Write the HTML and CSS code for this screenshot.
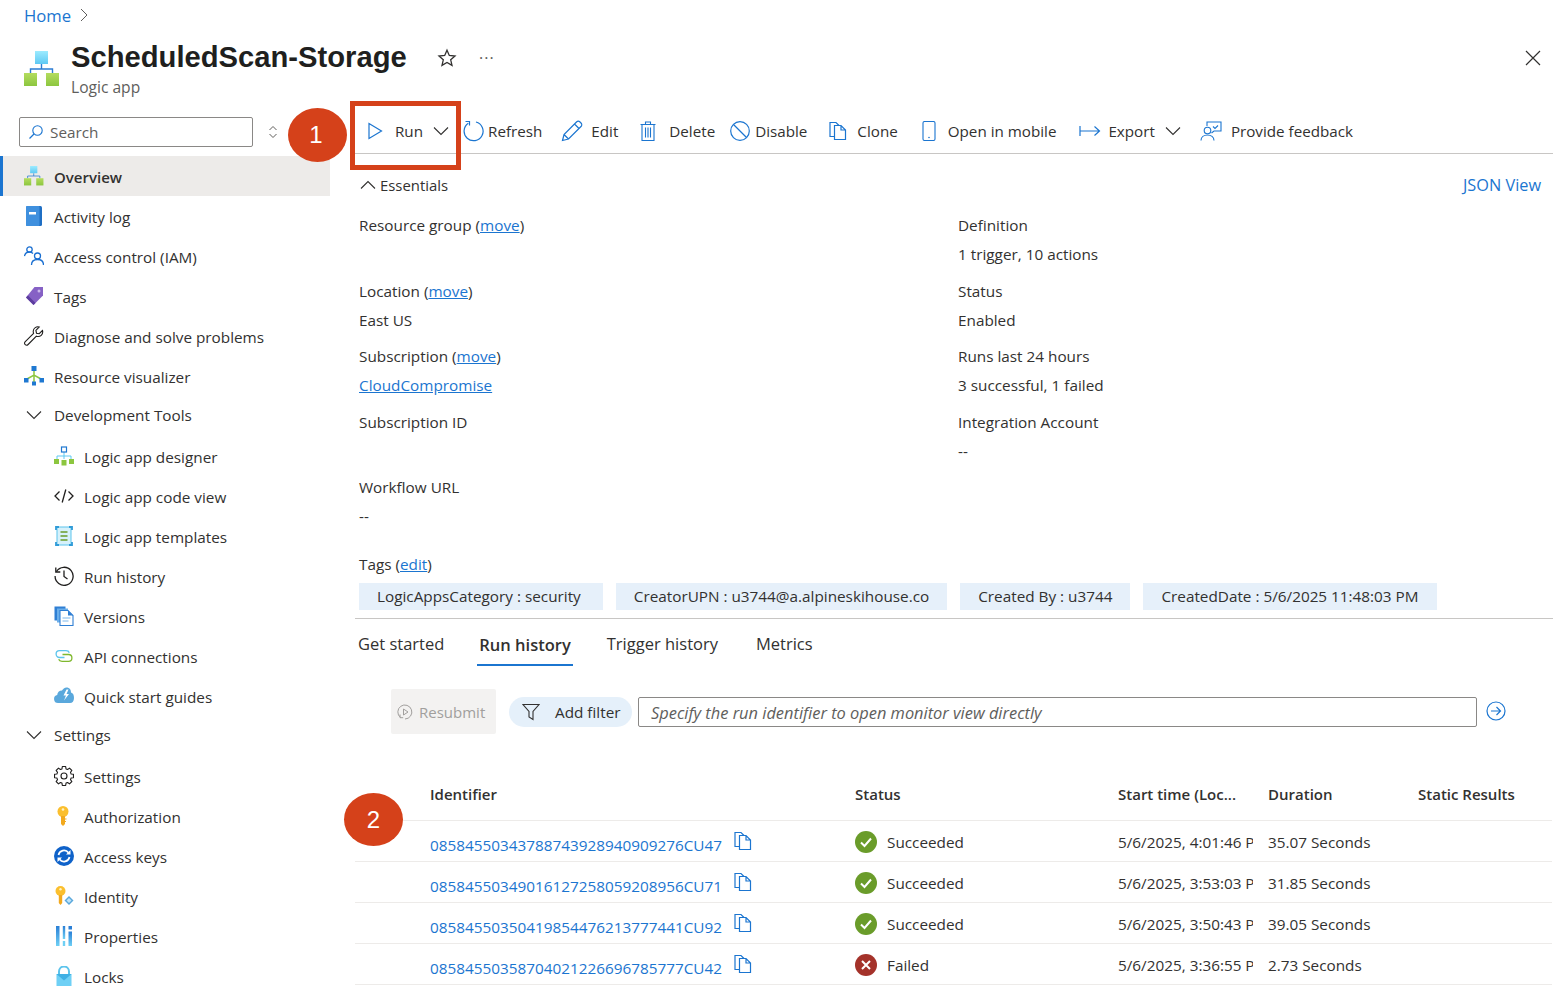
FILE: index.html
```html
<!DOCTYPE html>
<html lang="en">
<head>
  <meta charset="UTF-8" />
  <title>ScheduledScan-Storage - Logic app</title>
  <link rel="stylesheet" href="styles.css">
</head>
<body>
  <svg class="sprite" aria-hidden="true">
    <defs>
      <linearGradient id="skyGrad" x1="0" y1="0" x2="0" y2="1"><stop offset="0" stop-color="#9cebff"/><stop offset="1" stop-color="#5fc9f3"/></linearGradient>
      <linearGradient id="greenGrad" x1="0" y1="0" x2="0" y2="1"><stop offset="0" stop-color="#b4dc5f"/><stop offset="1" stop-color="#8cc63f"/></linearGradient>
      <linearGradient id="barGrad" x1="0" y1="0" x2="0" y2="1"><stop offset="0" stop-color="#2a7fd6"/><stop offset="1" stop-color="#6fd0f5"/></linearGradient>
      <symbol id="i-logic" viewBox="0 0 36 36">
        <path d="M17.5 13v5M6.5 22v-4h22v4" fill="none" stroke="#2b7cd3" stroke-width="1.4"/>
        <rect x="11" y="0" width="13" height="13" fill="url(#skyGrad)"/>
        <rect x="0" y="22" width="13" height="13" fill="url(#greenGrad)"/>
        <rect x="22" y="22" width="13" height="13" fill="url(#greenGrad)"/>
      </symbol>
      <symbol id="i-copy" viewBox="0 0 20 20">
        <path d="M6.5 15.5H2V1.5h6l3 3" fill="none" stroke="#1b75d0" stroke-width="1.2"/>
        <path d="M6.5 4.5h6.5l4.5 4.5v9.5H6.500zM13 4.5V9h4.500" fill="none" stroke="#1b75d0" stroke-width="1.2"/>
      </symbol>
      <symbol id="i-chev" viewBox="0 0 16 10">
        <path d="M1 1.500l7 7 7-7" fill="none" stroke="#323130" stroke-width="1.1"/>
      </symbol>
      <symbol id="i-ok" viewBox="0 0 22 22">
        <circle cx="11" cy="11" r="11" fill="#6a9c2a"/>
        <path d="M6 11.500l3.500 3.500L16 7.500" fill="none" stroke="#fff" stroke-width="2"/>
      </symbol>
      <symbol id="i-fail" viewBox="0 0 22 22">
        <circle cx="11" cy="11" r="11" fill="#a4322a"/>
        <path d="M7 7l8 8M15 7l-8 8" fill="none" stroke="#fff" stroke-width="2"/>
      </symbol>
    </defs>
  </svg>

  <div class="page">
    <div class="breadcrumb">
      <a class="link" href="#">Home</a>
      <svg class="crumb-sep" viewBox="0 0 8 14" width="8" height="14"><path d="M1 1l6 6-6 6" fill="none" stroke="#605e5c" stroke-width="1"/></svg>
    </div>

    <div class="title-row">
      <svg class="logo" width="36" height="36"><use href="#i-logic"/></svg>
      <div class="title-text">
        <h1>ScheduledScan-Storage</h1>
        <div class="subtitle">Logic app</div>
      </div>
      <svg class="star" viewBox="0 0 20 20" width="20" height="20"><path d="M10 2.200l2.300 5.300 5.700.5-4.300 3.800 1.300 5.600L10 14.500l-5 2.900 1.300-5.600L2 8l5.700-.5z" fill="none" stroke="#323130" stroke-width="1.300"/></svg>
      <div class="more">···</div>
      <svg class="close" viewBox="0 0 16 16" width="16" height="16"><path d="M1 1l14 14M15 1L1 15" stroke="#323130" stroke-width="1.200"/></svg>
    </div>

    <div class="layout">
      <aside class="sidebar">
        <div class="search-row">
          <div class="search">
            <svg viewBox="0 0 16 16" width="16" height="16"><circle cx="9.500" cy="6.500" r="4.700" fill="none" stroke="#1b75d0" stroke-width="1.100"/><path d="M6 10l-4.500 4.500" stroke="#1b75d0" stroke-width="1.200"/></svg>
            <span>Search</span>
          </div>
          <svg class="sort" viewBox="0 0 10 14" width="10" height="14"><path d="M1.500 5L5 1.500 8.500 5M1.500 9L5 12.500 8.500 9" fill="none" stroke="#605e5c" stroke-width="1"/></svg>
        </div>

        <nav class="nav">
          <a class="nav-item active"><svg class="ico" viewBox="0 0 20 20"><use href="#i-logic" width="20" height="20"/></svg><span>Overview</span></a>
          <a class="nav-item"><svg class="ico" viewBox="0 0 20 20"><rect x="2" y="0" width="16" height="20" rx="1.500" fill="#1f6fc4"/><rect x="2" y="0" width="13.500" height="20" rx="1" fill="#3f90de"/><rect x="5" y="6" width="7" height="2.500" fill="#fff"/></svg><span>Activity log</span></a>
          <a class="nav-item"><svg class="ico" viewBox="0 0 20 20"><g fill="none" stroke="#1a6fd1" stroke-width="1.300"><circle cx="5.500" cy="3.500" r="2.700"/><path d="M.5 10c.5-2.500 2.500-4 5-4 1.500 0 2.500.5 3.500 1.500"/><circle cx="13.500" cy="10" r="3"/><path d="M7.500 19c0-3.500 2.500-5.500 6-5.500s6 2 6 5.500"/></g></svg><span>Access control (IAM)</span></a>
          <a class="nav-item"><svg class="ico" viewBox="0 0 20 20"><path d="M10.500 1H19v8.500L9.500 19 2 11.500z" fill="#8661c5"/><path d="M2 11.500L9.500 19l2-2L4 9.500z" fill="#5c3d9e"/><circle cx="15" cy="5" r="1.500" fill="#c9b6ea"/></svg><span>Tags</span></a>
          <a class="nav-item"><svg class="ico" viewBox="0 0 20 20"><path d="M18.500 4.500l-3.300 3.200-2.700-.5-.6-2.800L15.200 1c-2.800-.8-5.800 1-6 4.200 0 .8.100 1.500.4 2.200L1.300 15.600c-1 1-1 2.200-.1 3 .9.800 2 .8 2.900-.1l8.300-8.300c3.700 1.200 7.200-1.700 6.100-5.700z" fill="none" stroke="#201f1e" stroke-width="1.100"/></svg><span>Diagnose and solve problems</span></a>
          <a class="nav-item"><svg class="ico" viewBox="0 0 20 20"><path d="M10 4v12M3 13l7-4 7 4" fill="none" stroke="#8cc63f" stroke-width="1.500"/><rect x="7.500" y="0" width="5" height="5" fill="#1f78d1"/><rect x="0" y="12" width="4.500" height="4.500" fill="#1f78d1"/><rect x="15.500" y="12" width="4.500" height="4.500" fill="#1f78d1"/><rect x="8" y="15.500" width="4" height="4" fill="#1f78d1"/></svg><span>Resource visualizer</span></a>

          <div class="nav-group"><svg class="group-chev" width="16" height="10"><use href="#i-chev"/></svg><span>Development Tools</span></div>
          <a class="nav-item sub"><svg class="ico" viewBox="0 0 20 20"><path d="M10 6v4M3 13v-3h14v3M10 10v3" fill="none" stroke="#5fc9f3" stroke-width="1"/><rect x="7.500" y="1" width="5" height="5" fill="#fff" stroke="#1f78d1" stroke-width="1.200"/><rect x="0" y="13" width="5" height="5" fill="#8cc63f"/><rect x="7.500" y="14" width="5" height="5.500" fill="#8cc63f"/><rect x="15" y="13" width="5" height="5" fill="#8cc63f"/></svg><span>Logic app designer</span></a>
          <a class="nav-item sub"><svg class="ico" viewBox="0 0 20 20"><path d="M5.500 5.500L1 10l4.500 4.500M14.500 5.500L19 10l-4.500 4.500M11.800 3.500L8.200 16.500" fill="none" stroke="#201f1e" stroke-width="1.300"/></svg><span>Logic app code view</span></a>
          <a class="nav-item sub"><svg class="ico" viewBox="0 0 20 20"><rect x="3" y="1" width="14" height="18" fill="#d6f1fb" stroke="#5cc4ec" stroke-width="1"/><path d="M2 4V1h3M15 1h3v3M2 16v3h3M15 19h3v-3" fill="none" stroke="#2f9bd8" stroke-width="1.800"/><path d="M6.500 6h7M6.500 10h7M6.500 14h7" stroke="#6a9c2a" stroke-width="1.600"/></svg><span>Logic app templates</span></a>
          <a class="nav-item sub"><svg class="ico" viewBox="0 0 20 20"><path d="M2.400 5.600A9 9 0 1 1 1.100 10" fill="none" stroke="#201f1e" stroke-width="1.300"/><path d="M1.800 1.500v4.500h4.500M10 4.500V10.500l3.500 2.500" fill="none" stroke="#201f1e" stroke-width="1.300"/></svg><span>Run history</span></a>
          <a class="nav-item sub"><svg class="ico" viewBox="0 0 20 20"><rect x="0.500" y="0.500" width="11" height="14" fill="#2f7fd4"/><rect x="3" y="2.500" width="11" height="14" fill="#6aaeea"/><path d="M6 4.500h8l5 5V19.500H6z" fill="#fff" stroke="#2f7fd4" stroke-width="1.100"/><path d="M14 4.500l5 5h-5z" fill="#2f7fd4"/><path d="M8.500 12h8M8.500 15h6" stroke="#7db7ec" stroke-width="1.200"/></svg><span>Versions</span></a>
          <a class="nav-item sub"><svg class="ico" viewBox="0 0 20 20"><g fill="none" stroke-width="1.300"><path d="M10.500 11.500H5.500a3.300 3.300 0 0 1 0-6.800h6.500c1.800 0 3 1 3.300 2" stroke="#5cc4ec"/><path d="M8.500 8.500h6a3.300 3.300 0 0 1 0 6.800H8c-1.800 0-3-1-3.300-2" stroke="#7fb82e"/></g></svg><span>API connections</span></a>
          <a class="nav-item sub"><svg class="ico" viewBox="0 0 20 20"><path d="M4 17a4 4 0 0 1-.8-7.900A5 5 0 0 1 8 4.500c1-2 3-3.500 5.500-3 2.500.5 3.500 2.500 3.500 5 2 .5 3 2.500 3 5.500s-1.500 5-4 5z" fill="#5aa8dc"/><path d="M12.500 3.500L9.500 9.500h2.500l-2 5 5-6.500h-2.500l2-4.500z" fill="#fff"/></svg><span>Quick start guides</span></a>

          <div class="nav-group"><svg class="group-chev" width="16" height="10"><use href="#i-chev"/></svg><span>Settings</span></div>
          <a class="nav-item sub"><svg class="ico" viewBox="0 0 20 20"><path d="M17.110 7.960L19.450 8.330V11.670L17.110 12.040 16.470 13.590 17.860 15.510 15.510 17.860 13.590 16.470 12.040 17.110 11.670 19.450H8.330L7.960 17.110 6.410 16.470 4.490 17.860 2.140 15.510 3.530 13.590 2.890 12.040 .55 11.670V8.330L2.890 7.960 3.530 6.410 2.140 4.490 4.490 2.140 6.410 3.530 7.960 2.890 8.330 .55H11.670L12.040 2.890 13.590 3.530 15.510 2.140 17.860 4.490 16.470 6.410z" fill="none" stroke="#201f1e" stroke-width="1.100" stroke-linejoin="round"/><circle cx="10" cy="10" r="3" fill="none" stroke="#201f1e" stroke-width="1.100"/></svg><span>Settings</span></a>
          <a class="nav-item sub"><svg class="ico" viewBox="0 0 20 20"><circle cx="9" cy="5.500" r="5.500" fill="#fbbf2e"/><circle cx="9" cy="3.500" r="1.300" fill="#fff2c4"/><path d="M7 10h4v8l-2 2-2-2z" fill="#f2a91e"/><path d="M11 13h1.500M11 15.500h1" stroke="#f2a91e" stroke-width="1.200"/></svg><span>Authorization</span></a>
          <a class="nav-item sub"><svg class="ico" viewBox="0 0 20 20"><circle cx="10" cy="10" r="10" fill="#0f62c9"/><path d="M4.500 9a5.600 5.600 0 0 1 10-2.300M15.500 11a5.600 5.600 0 0 1-10 2.300" fill="none" stroke="#fff" stroke-width="1.700"/><path d="M16.500 4v4.500H12zM3.500 16v-4.500H8z" fill="#fff"/></svg><span>Access keys</span></a>
          <a class="nav-item sub"><svg class="ico" viewBox="0 0 20 20"><circle cx="6.500" cy="5" r="5" fill="#fbbf2e"/><circle cx="6.500" cy="3.200" r="1.200" fill="#fff2c4"/><path d="M4.800 9h3.400v8l-1.700 2-1.700-2z" fill="#f2a91e"/><path d="M15 10l4.500 4.500-4.500 4.500-4.500-4.500z" fill="#5aa8dc"/><path d="M15 12l2.500 2.500-2.500 2.500-2.500-2.500z" fill="#bfe3f7"/></svg><span>Identity</span></a>
          <a class="nav-item sub"><svg class="ico" viewBox="0 0 20 20"><rect x="2" y="0" width="3.500" height="20" fill="url(#barGrad)"/><rect x="8.800" y="0" width="2.400" height="13" fill="url(#barGrad)"/><rect x="8.800" y="15" width="2.400" height="5" fill="#6fd0f5"/><rect x="14.500" y="0" width="3.500" height="3.500" fill="#2a7fd6"/><rect x="14.500" y="5.500" width="3.500" height="14.500" fill="url(#barGrad)"/></svg><span>Properties</span></a>
          <a class="nav-item sub"><svg class="ico" viewBox="0 0 20 20"><path d="M5 9V5.500a5 5 0 0 1 10 0V9" fill="none" stroke="#5cc4ec" stroke-width="2"/><rect x="2.500" y="8" width="15" height="12" fill="#6fd0f5"/><path d="M2.500 8h15L10 14.500z" fill="#3fb0e4"/></svg><span>Locks</span></a>
        </nav>
      </aside>

      <main class="main">
        <div class="toolbar">
          <div class="tool tool-run"><svg viewBox="0 0 16 18" width="16" height="18"><path d="M2 1.500L14.500 9 2 16.500z" fill="none" stroke="#1b75d0" stroke-width="1.200"/></svg><span>Run</span><svg class="tool-chev" width="16" height="10"><use href="#i-chev"/></svg></div>
          <div class="tool tool-refresh"><svg viewBox="0 0 22 22" width="22" height="22"><path d="M6.300 3.300A9.500 9.500 0 1 0 14 2" fill="none" stroke="#1b75d0" stroke-width="1.200"/><path d="M3.500 1.500h4v4" fill="none" stroke="#1b75d0" stroke-width="1.200"/></svg><span>Refresh</span></div>
          <div class="tool tool-edit"><svg viewBox="0 0 22 22" width="22" height="22"><path d="M1.500 20.500l1.500-6L15.500 2c1-1 2.500-1 3.500 0l1 1c1 1 1 2.500 0 3.500L7.500 19zM3 14.500L7.500 19M13.500 4l4.500 4.500" fill="none" stroke="#1b75d0" stroke-width="1.200"/></svg><span>Edit</span></div>
          <div class="tool tool-delete"><svg viewBox="0 0 16 20" width="16" height="20"><path d="M.5 3.500h15M5.500 3.500V1h5v2.500M2 3.500V19.500h12V3.500M5.500 6.500v10M8 6.500v10M10.500 6.500v10" fill="none" stroke="#1b75d0" stroke-width="1.100"/></svg><span>Delete</span></div>
          <div class="tool tool-disable"><svg viewBox="0 0 20 20" width="20" height="20"><circle cx="10" cy="10" r="9.300" fill="none" stroke="#1b75d0" stroke-width="1.200"/><path d="M3.500 3.500l13 13" stroke="#1b75d0" stroke-width="1.200"/></svg><span>Disable</span></div>
          <div class="tool tool-clone"><svg viewBox="0 0 20 20" width="20" height="20"><use href="#i-copy"/></svg><span>Clone</span></div>
          <div class="tool tool-mobile"><svg viewBox="0 0 14 20" width="14" height="20"><rect x="1" y="0.500" width="12" height="19" rx="1.500" fill="none" stroke="#1b75d0" stroke-width="1.100"/><circle cx="7" cy="16.500" r=".8" fill="#1b75d0"/></svg><span>Open in mobile</span></div>
          <div class="tool tool-export"><svg viewBox="0 0 22 12" width="22" height="12"><path d="M1 1v10M1 6h19M15.500 1.500L20.500 6l-5 4.500" fill="none" stroke="#1b75d0" stroke-width="1.200"/></svg><span>Export</span><svg class="tool-chev" width="16" height="10"><use href="#i-chev"/></svg></div>
          <div class="tool tool-feedback"><svg viewBox="0 0 22 20" width="22" height="20"><path d="M7 5V1h14v9h-7l-2.500 2" fill="none" stroke="#1b75d0" stroke-width="1.100"/><circle cx="7.500" cy="9.500" r="3.300" fill="none" stroke="#1b75d0" stroke-width="1.100"/><path d="M1 19.500c0-3.500 3-5.500 6.500-5.500s6.500 2 6.500 5.500" fill="none" stroke="#1b75d0" stroke-width="1.100"/><path d="M13 5.500l2 2 3-3" fill="none" stroke="#1b75d0" stroke-width="1.100"/></svg><span>Provide feedback</span></div>
        </div>

        <div class="essentials-head">
          <svg viewBox="0 0 16 10" width="16" height="10"><path d="M1 8.500l7-7 7 7" fill="none" stroke="#323130" stroke-width="1.100"/></svg>
          <span>Essentials</span>
          <a class="link json" href="#">JSON View</a>
        </div>

        <div class="fields">
          <div class="field"><div>Resource group (<a class="link under" href="#">move</a>)</div></div>
          <div class="field"><div>Definition</div><div>1 trigger, 10 actions</div></div>
          <div class="field"><div>Location (<a class="link under" href="#">move</a>)</div><div>East US</div></div>
          <div class="field"><div>Status</div><div>Enabled</div></div>
          <div class="field"><div>Subscription (<a class="link under" href="#">move</a>)</div><div><a class="link under" href="#">CloudCompromise</a></div></div>
          <div class="field"><div>Runs last 24 hours</div><div>3 successful, 1 failed</div></div>
          <div class="field"><div>Subscription ID</div></div>
          <div class="field"><div>Integration Account</div><div>--</div></div>
          <div class="field"><div>Workflow URL</div><div>--</div></div>
        </div>

        <div class="tags-label">Tags (<a class="link under" href="#">edit</a>)</div>
        <div class="tags">
          <span class="tag">LogicAppsCategory : security</span>
          <span class="tag">CreatorUPN : u3744@a.alpineskihouse.co</span>
          <span class="tag">Created By : u3744</span>
          <span class="tag">CreatedDate : 5/6/2025 11:48:03 PM</span>
        </div>

        <div class="tabs">
          <div class="tab">Get started</div>
          <div class="tab selected">Run history</div>
          <div class="tab">Trigger history</div>
          <div class="tab">Metrics</div>
        </div>

        <div class="filter-row">
          <div class="resubmit"><svg viewBox="0 0 16 16" width="16" height="16"><path d="M3.500 13.500A7 7 0 1 1 8 15" fill="none" stroke="#a19f9d" stroke-width="1"/><path d="M6.500 5v6l4.500-3z" fill="none" stroke="#a19f9d" stroke-width="1"/><path d="M3 10.500v3.200h3.200" fill="none" stroke="#a19f9d" stroke-width="1"/></svg><span>Resubmit</span></div>
          <div class="add-filter"><svg viewBox="0 0 18 18" width="18" height="18"><path d="M1 1.500h16l-6 7v8l-4-2.500V8.500z" fill="none" stroke="#323130" stroke-width="1.100"/></svg><span>Add filter</span></div>
          <div class="run-id">Specify the run identifier to open monitor view directly</div>
          <svg class="go" viewBox="0 0 20 20" width="20" height="20"><circle cx="10" cy="10" r="9" fill="none" stroke="#1b75d0" stroke-width="1.200"/><path d="M5 10h9.500M10.500 6l4 4-4 4" fill="none" stroke="#1b75d0" stroke-width="1.200"/></svg>
        </div>

        <div class="runs">
          <div class="runs-head">
            <div></div><div>Identifier</div><div>Status</div><div>Start time (Loc...</div><div>Duration</div><div>Static Results</div>
          </div>
          <div class="run">
            <div></div>
            <div class="run-name"><a class="link" href="#">08584550343788743928940909276CU47</a><svg width="20" height="20"><use href="#i-copy"/></svg></div>
            <div class="run-status"><svg width="22" height="22"><use href="#i-ok"/></svg>Succeeded</div>
            <div class="run-time">5/6/2025, 4:01:46 PM</div><div>35.07 Seconds</div><div></div>
          </div>
          <div class="run">
            <div></div>
            <div class="run-name"><a class="link" href="#">08584550349016127258059208956CU71</a><svg width="20" height="20"><use href="#i-copy"/></svg></div>
            <div class="run-status"><svg width="22" height="22"><use href="#i-ok"/></svg>Succeeded</div>
            <div class="run-time">5/6/2025, 3:53:03 PM</div><div>31.85 Seconds</div><div></div>
          </div>
          <div class="run">
            <div></div>
            <div class="run-name"><a class="link" href="#">08584550350419854476213777441CU92</a><svg width="20" height="20"><use href="#i-copy"/></svg></div>
            <div class="run-status"><svg width="22" height="22"><use href="#i-ok"/></svg>Succeeded</div>
            <div class="run-time">5/6/2025, 3:50:43 PM</div><div>39.05 Seconds</div><div></div>
          </div>
          <div class="run">
            <div></div>
            <div class="run-name"><a class="link" href="#">08584550358704021226696785777CU42</a><svg width="20" height="20"><use href="#i-copy"/></svg></div>
            <div class="run-status"><svg width="22" height="22"><use href="#i-fail"/></svg>Failed</div>
            <div class="run-time">5/6/2025, 3:36:55 PM</div><div>2.73 Seconds</div><div></div>
          </div>
        </div>
      </main>
    </div>

    <!-- annotations drawn over the screenshot -->
    <div class="callout callout-1">1</div>
    <div class="callout callout-2">2</div>
    <div class="run-box"></div>
  </div>
</body>
</html>
```

FILE: styles.css
```css
* {
  box-sizing: border-box;
}
html, body {
  margin: 0;
  padding: 0;
  height: 1001px;
  overflow: hidden;
  background: #fff;
}
body {
  font-family: "Open Sans", "Noto Sans", Arial, sans-serif;
  font-size: 15.3px;
  color: #323130;
}
.sprite {
  position: absolute;
  width: 0;
  height: 0;
}
.page {
  position: relative;
  width: 1553px;
  height: 1001px;
  overflow: hidden;
}
.link {
  color: #1b75d0;
  text-decoration: none;
}
.under {
  text-decoration: underline;
}

/* header */
.breadcrumb {
  height: 32px;
  padding: 0 0 2px 24px;
  display: flex;
  align-items: center;
  gap: 9px;
  font-size: 16.7px;
}
.title-row {
  height: 76px;
  display: flex;
  align-items: flex-start;
  padding-left: 24px;
  padding-right: 12px;
}
.logo {
  margin-top: 19px;
}
.title-text {
  margin-left: 11px;
  width: 366px;
}
h1 {
  margin: 7px 0 0;
  font-family: "Liberation Sans", Arial, sans-serif;
  font-size: 29.2px;
  line-height: 36px;
  font-weight: 700;
  color: #201f1e;
}
.subtitle {
  margin-top: 2px;
  line-height: 20px;
  font-size: 15.6px;
  color: #605e5c;
}
.star {
  margin-top: 16px;
}
.more {
  margin: 16px 0 0 22px;
  font-size: 16px;
  line-height: 20px;
  letter-spacing: 1px;
  color: #605e5c;
}
.close {
  margin: 18px 0 0 auto;
}

/* left menu */
.layout {
  display: flex;
}
.sidebar {
  width: 330px;
  flex: none;
}
.search-row {
  display: flex;
  align-items: center;
  padding: 9px 0 0 19px;
}
.search {
  width: 234px;
  height: 30px;
  border: 1px solid #8a8886;
  border-radius: 2px;
  display: flex;
  align-items: center;
  gap: 6px;
  padding-left: 8px;
  color: #605e5c;
}
.sort {
  margin-left: 15px;
}
.nav {
  margin-top: 9px;
}
.nav-item {
  height: 40px;
  display: flex;
  align-items: center;
  gap: 10px;
  padding-left: 24px;
  color: #323130;
}
.nav-item span {
  padding-top: 2px;
}
.nav-item.active {
  background: #edebe9;
  border-left: 3px solid #1b75d0;
  padding-left: 21px;
  font-size: 15px;
  font-weight: 600;
}
.nav-item.sub {
  padding-left: 54px;
}
.ico {
  width: 20px;
  height: 20px;
  flex: none;
}
.nav-group {
  height: 37px;
  margin-bottom: 3px;
  display: flex;
  align-items: center;
  gap: 12px;
  padding-left: 26px;
}

/* main column */
.main {
  margin-left: 25px;
  flex: 1;
  min-width: 0;
}
.toolbar {
  height: 46px;
  border-bottom: 1px solid #c8c6c4;
  display: flex;
  align-items: center;
  padding-top: 1px;
  font-size: 15.2px;
}
.tool {
  display: flex;
  align-items: center;
  flex: none;
  white-space: nowrap;
}
.tool-run {
  margin-left: 12px;
  gap: 12px;
}
.tool-run .tool-chev {
  margin-left: -2px;
}
.tool-refresh {
  margin-left: 13px;
  gap: 4px;
}
.tool-edit {
  margin-left: 19px;
  gap: 8px;
}
.tool-delete {
  margin-left: 22px;
  gap: 13px;
}
.tool-disable {
  margin-left: 15px;
  gap: 5px;
}
.tool-clone {
  margin-left: 21px;
  gap: 9px;
}
.tool-mobile {
  margin-left: 24px;
  gap: 12px;
}
.tool-export {
  margin-left: 23px;
  gap: 7px;
}
.tool-export .tool-chev {
  margin-left: 3px;
}
.tool-feedback {
  margin-left: 19px;
  gap: 9px;
}
.essentials-head {
  margin-top: 16px;
  height: 30px;
  display: flex;
  align-items: center;
  gap: 4px;
  padding-left: 5px;
  font-size: 14.9px;
}
.json {
  margin-left: auto;
  margin-right: 12px;
  font-size: 16.3px;
}
.fields {
  margin-top: 11px;
  padding-left: 4px;
  display: grid;
  grid-template-columns: 599px 1fr;
  grid-auto-rows: 65.5px;
}
.field {
  line-height: 29px;
}
.tags-label {
  margin-top: 11px;
  padding-left: 4px;
  line-height: 29px;
}
.tags {
  margin-top: 4px;
  padding: 0 0 8px 4px;
  display: flex;
  gap: 13px;
  border-bottom: 1px solid #c8c6c4;
}
.tag {
  height: 27px;
  line-height: 27px;
  padding: 0 18px;
  background: #e6f0fa;
  white-space: nowrap;
}
.tag:first-child {
  padding-right: 22px;
}

/* tabs */
.tabs {
  height: 48px;
  display: flex;
  padding-left: 3px;
  font-size: 16.5px;
}
.tab {
  padding: 13px 0 0;
  margin-right: 38px;
}
.tab.selected {
  height: 47px;
  margin-left: -5px;
  margin-right: 34px;
  padding: 14px 2px 0;
  font-weight: 600;
  border-bottom: 2px solid #1b75d0;
}

/* filter bar */
.filter-row {
  margin-top: 22px;
  height: 45px;
  display: flex;
  align-items: center;
  padding-left: 36px;
}
.resubmit {
  width: 105px;
  height: 45px;
  background: #f3f2f1;
  border-radius: 2px;
  display: flex;
  align-items: center;
  gap: 6px;
  padding: 1px 0 0 6px;
  font-size: 15px;
  color: #a19f9d;
}
.add-filter {
  margin: 1px 0 0 13px;
  width: 123px;
  height: 30px;
  background: #e5f0fa;
  border-radius: 15px;
  display: flex;
  align-items: center;
  gap: 15px;
  padding-left: 13px;
}
.run-id {
  margin: 1px 0 0 6px;
  width: 839px;
  height: 30px;
  line-height: 30px;
  border: 1px solid #8a8886;
  border-radius: 2px;
  padding-left: 12px;
  font-size: 16.4px;
  font-style: italic;
  color: #605e5c;
}
.go {
  margin: -1px 0 0 9px;
}

/* run table */
.runs {
  margin-top: 34px;
  width: 1197px;
}
.runs-head,
.run {
  display: grid;
  grid-template-columns: 75px 425px 263px 150px 150px 134px;
}
.runs-head {
  height: 53px;
  padding-top: 16px;
  line-height: 20px;
  font-size: 15px;
  font-weight: 600;
  border-bottom: 1px solid #edebe9;
}
.run {
  height: 41px;
  padding-top: 2px;
  align-items: center;
  border-bottom: 1px solid #edebe9;
}
.run-name {
  display: flex;
  align-items: center;
  gap: 11px;
}
.run-name a {
  margin-top: 6px;
}
.run-name svg {
  margin-top: -1px;
}
.run-status {
  display: flex;
  align-items: center;
  gap: 10px;
}
.run-time {
  width: 135px;
  overflow: hidden;
  white-space: nowrap;
}

/* annotations */
.callout {
  position: absolute;
  background: #d5411a;
  color: #fff;
  border-radius: 50%;
  font-family: "Liberation Sans", Arial, sans-serif;
  font-size: 24px;
  display: flex;
  align-items: center;
  justify-content: center;
}
.callout-1 {
  left: 288px;
  top: 108px;
  width: 59px;
  height: 54px;
  padding-right: 3px;
}
.callout-2 {
  left: 344px;
  top: 793px;
  width: 59px;
  height: 53px;
}
.run-box {
  position: absolute;
  left: 350px;
  top: 101px;
  width: 111px;
  height: 69px;
  border: 5px solid #d5411a;
}
```
